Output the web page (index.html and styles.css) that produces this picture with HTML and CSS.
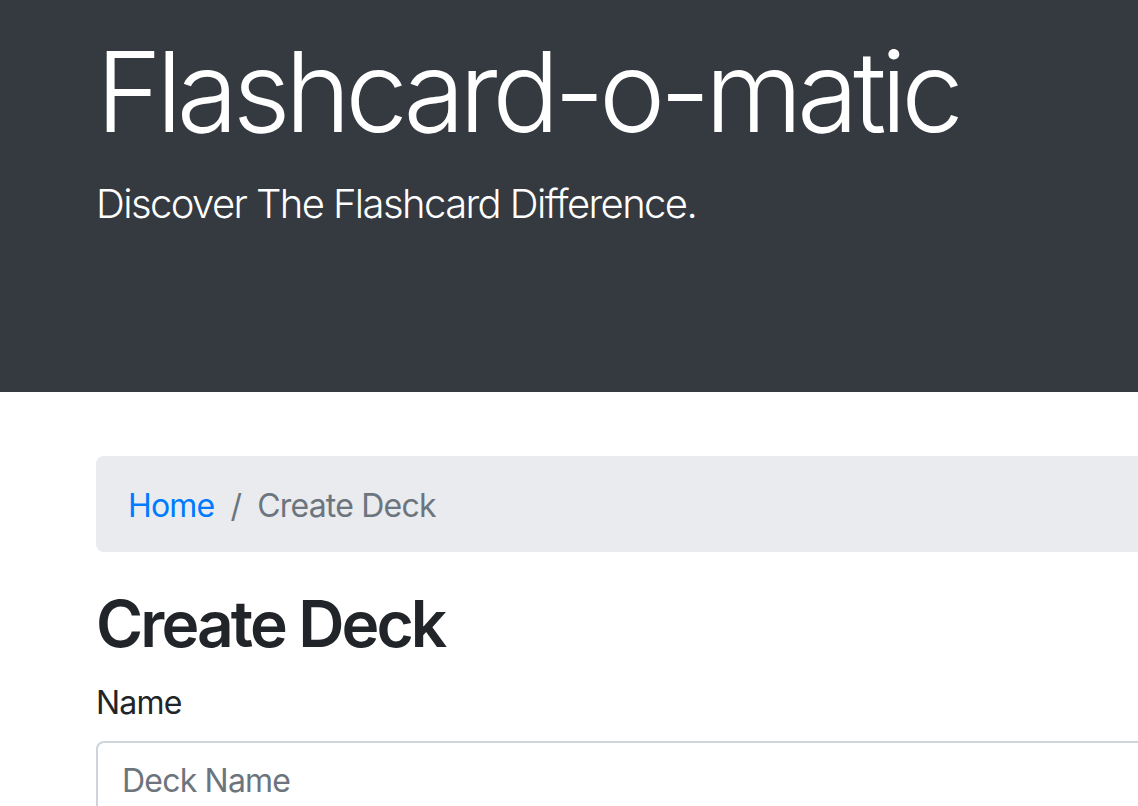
FILE: index.html
```html
<!DOCTYPE html>
<html lang="en">
<head>
<meta charset="utf-8">
<title>Flashcard-o-matic</title>
<link rel="stylesheet" href="styles.css">
</head>
<body>
<header class="jumbotron">
  <div class="container">
    <h1 class="display">Flashcard-o-matic</h1>
    <p class="lead">Discover The Flashcard Difference.</p>
  </div>
</header>
<main class="container">
  <nav class="breadcrumb">
    <a class="crumb-link" href="#">Home</a>
    <span class="crumb-sep">/</span>
    <span class="crumb-active">Create Deck</span>
  </nav>
  <h2 class="page-title">Create Deck</h2>
  <form class="form">
    <label class="form-label" for="name">Name</label>
    <input class="form-control" id="name" type="text" placeholder="Deck Name">
  </form>
</main>
</body>
</html>
```
FILE: styles.css
```css
html, body {
  margin: 0;
  padding: 0;
  overflow: hidden;
}
body {
  font-family: Inter, "Liberation Sans", sans-serif;
  font-size: 32px;
  line-height: 1.5;
  letter-spacing: -0.025em;
  color: #212529;
  background: #fff;
  width: 1138px;
  height: 806px;
}
.container {
  padding-left: 96px;
  width: 1300px;
  box-sizing: border-box;
}
.jumbotron {
  background: #343a40;
  color: #fff;
  padding: 24px 0 126px;
  margin-bottom: 64px;
}
.display {
  font-size: 112px;
  font-weight: 300;
  line-height: 1.2;
  letter-spacing: -0.05em;
  margin: 0 0 16px;
}
.lead {
  font-size: 40px;
  font-weight: 300;
  line-height: 1.5;
  letter-spacing: -0.04em;
  margin: 0 0 32px;
}
.breadcrumb {
  display: flex;
  align-items: center;
  background: #e9ebef;
  border-radius: 8px;
  padding: 26px 32px 22px;
  margin-bottom: 32px;
}
.crumb-link {
  color: #007bff;
  text-decoration: none;
}
.crumb-sep {
  color: #6c757d;
  padding: 0 16px;
}
.crumb-active {
  color: #6c757d;
}
.page-title {
  font-size: 64px;
  font-weight: 560;
  line-height: 1.2;
  letter-spacing: -0.045em;
  padding-top: 2px;
  margin: 0 0 14px;
}
.form-label {
  display: block;
  padding-top: 2px;
  margin-bottom: 14px;
}
.form-control {
  display: block;
  box-sizing: border-box;
  width: 100%;
  height: 76px;
  padding: 13px 24px 11px;
  font-family: inherit;
  font-size: 32px;
  line-height: 1.5;
  letter-spacing: -0.025em;
  color: #495057;
  border: 2px solid #ced4da;
  border-radius: 8px;
  background: #fff;
}
.form-control::placeholder {
  color: #6c757d;
  opacity: 1;
}
```
